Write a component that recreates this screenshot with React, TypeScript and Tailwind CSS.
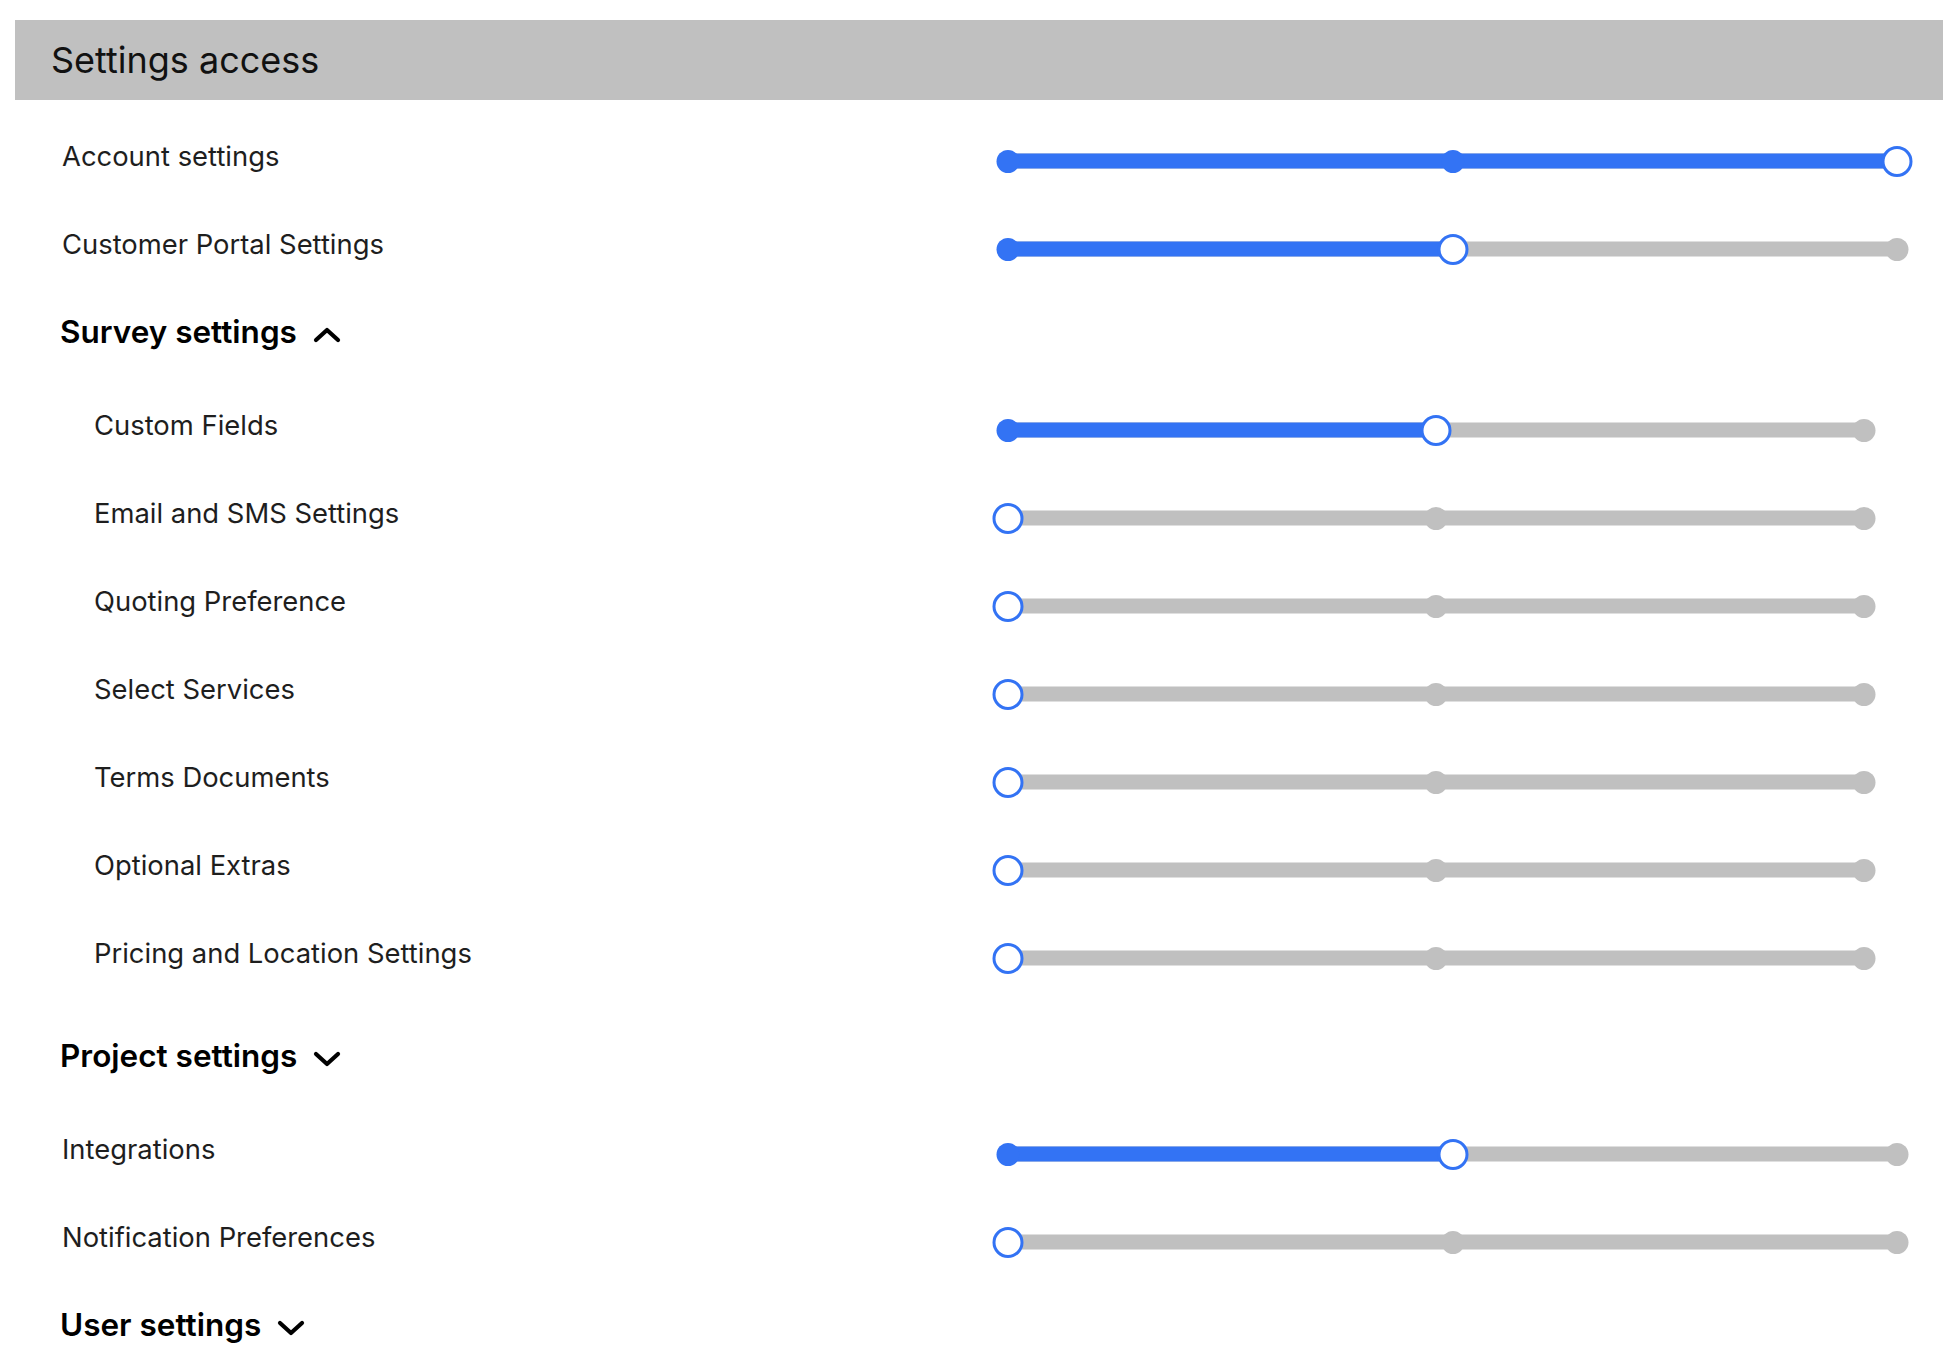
import { useState } from "react";

type Row = { label: string; value: number };

const topRows: Row[] = [
  { label: "Account settings", value: 2 },
  { label: "Customer Portal Settings", value: 1 },
];

const surveyRows: Row[] = [
  { label: "Custom Fields", value: 1 },
  { label: "Email and SMS Settings", value: 0 },
  { label: "Quoting Preference", value: 0 },
  { label: "Select Services", value: 0 },
  { label: "Terms Documents", value: 0 },
  { label: "Optional Extras", value: 0 },
  { label: "Pricing and Location Settings", value: 0 },
];

const projectRows: Row[] = [
  { label: "Integrations", value: 1 },
  { label: "Notification Preferences", value: 0 },
];

function Chevron({ up }: { up: boolean }) {
  return (
    <svg width="28" height="16" viewBox="0 0 28 16" className="ml-[16px] mt-[6px]">
      <polyline
        points={up ? "3,13 14,3 25,13" : "3,3 14,13 25,3"}
        fill="none"
        stroke="#000"
        strokeWidth="4.2"
        strokeLinecap="round"
        strokeLinejoin="round"
      />
    </svg>
  );
}

function LevelSlider({ value, nested }: { value: number; nested?: boolean }) {
  const pct = value * 50;
  return (
    <div className={nested ? "relative h-[32px] w-[878px]" : "relative h-[32px] w-[911px]"}>
      <div className="absolute inset-x-[11px] top-1/2 h-[15px] -translate-y-1/2">
        <div className="absolute inset-0 bg-[#c0c0c0]" />
        <div className="absolute inset-y-0 left-0 bg-[#3373f4]" style={{ width: `${pct}%` }} />
        {[0, 1, 2].map((i) => (
          <div
            key={i}
            className={
              i <= value
                ? "absolute top-1/2 h-[23px] w-[23px] -translate-x-1/2 -translate-y-1/2 rounded-full bg-[#3373f4]"
                : "absolute top-1/2 h-[23px] w-[23px] -translate-x-1/2 -translate-y-1/2 rounded-full bg-[#c0c0c0]"
            }
            style={{ left: `${i * 50}%` }}
          />
        ))}
        <div
          className="absolute top-1/2 h-[31px] w-[31px] -translate-x-1/2 -translate-y-1/2 rounded-full border-[3px] border-[#3373f4] bg-white"
          style={{ left: `${pct}%` }}
        />
      </div>
    </div>
  );
}

function SettingRow({ row, nested }: { row: Row; nested?: boolean }) {
  return (
    <div className={nested ? "flex h-[88px] items-center pl-[79px]" : "flex h-[88px] items-center pl-[47px]"}>
      <div
        className={
          nested
            ? "mb-[9px] w-[903px] text-[27.4px] text-[#1e1e1e]"
            : "mb-[9px] w-[935px] text-[27.4px] text-[#1e1e1e]"
        }
      >
        {row.label}
      </div>
      <LevelSlider value={row.value} nested={nested} />
    </div>
  );
}

function SectionHeading({ title, open, onToggle }: { title: string; open: boolean; onToggle: () => void }) {
  return (
    <button
      onClick={onToggle}
      className="mb-[15px] flex h-[78px] items-center pl-[45px] text-[31.5px] font-semibold text-black"
    >
      {title}
      <Chevron up={open} />
    </button>
  );
}

export default function App() {
  const [surveyOpen, setSurveyOpen] = useState(true);
  const [projectOpen, setProjectOpen] = useState(false);
  const [userOpen, setUserOpen] = useState(false);

  return (
    <div className="min-h-screen bg-white px-[15px] pt-[20px] font-['Inter','Liberation_Sans',sans-serif]">
      <div className="flex h-[80px] items-center bg-[#c0c0c0] pl-[36px] text-[36px] text-[#111]">
        Settings access
      </div>
      <div className="pt-[17px]">
        {topRows.map((r) => (
          <SettingRow key={r.label} row={r} />
        ))}
        <SectionHeading title="Survey settings" open={surveyOpen} onToggle={() => setSurveyOpen(!surveyOpen)} />
        {surveyOpen && (
          <div className="pb-[15px]">
            {surveyRows.map((r) => (
              <SettingRow key={r.label} row={r} nested />
            ))}
          </div>
        )}
        <SectionHeading title="Project settings" open={projectOpen} onToggle={() => setProjectOpen(!projectOpen)} />
        {projectRows.map((r) => (
          <SettingRow key={r.label} row={r} />
        ))}
        <SectionHeading title="User settings" open={userOpen} onToggle={() => setUserOpen(!userOpen)} />
      </div>
    </div>
  );
}
